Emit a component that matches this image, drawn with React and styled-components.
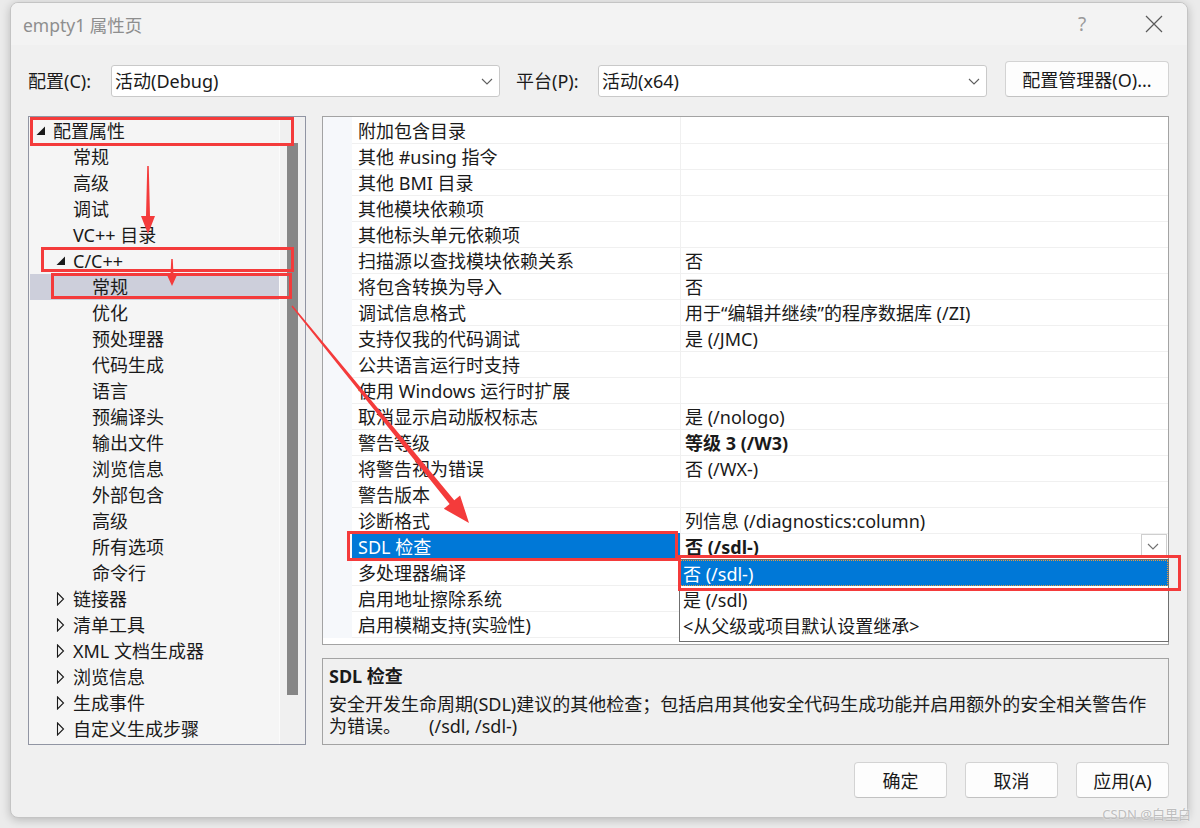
import React from "react";
import styled, { createGlobalStyle } from "styled-components";

const FONT = `"Noto Sans", "Noto Sans CJK SC", sans-serif`;

const GlobalStyle = createGlobalStyle`
  html, body {
    margin: 0;
    background: #ebebeb;
    font-family: ${FONT};
    font-size: 18px;
    color: #1a1a1a;
  }
  * { box-sizing: border-box; }
`;

const treeItems = [
  { label: "配置属性", level: 0, exp: "open" },
  { label: "常规", level: 1 },
  { label: "高级", level: 1 },
  { label: "调试", level: 1 },
  { label: "VC++ 目录", level: 1 },
  { label: "C/C++", level: 1, exp: "open" },
  { label: "常规", level: 2, selected: true },
  { label: "优化", level: 2 },
  { label: "预处理器", level: 2 },
  { label: "代码生成", level: 2 },
  { label: "语言", level: 2 },
  { label: "预编译头", level: 2 },
  { label: "输出文件", level: 2 },
  { label: "浏览信息", level: 2 },
  { label: "外部包含", level: 2 },
  { label: "高级", level: 2 },
  { label: "所有选项", level: 2 },
  { label: "命令行", level: 2 },
  { label: "链接器", level: 1, exp: "closed" },
  { label: "清单工具", level: 1, exp: "closed" },
  { label: "XML 文档生成器", level: 1, exp: "closed" },
  { label: "浏览信息", level: 1, exp: "closed" },
  { label: "生成事件", level: 1, exp: "closed" },
  { label: "自定义生成步骤", level: 1, exp: "closed" },
];

const props = [
  ["附加包含目录", ""],
  ["其他 #using 指令", ""],
  ["其他 BMI 目录", ""],
  ["其他模块依赖项", ""],
  ["其他标头单元依赖项", ""],
  ["扫描源以查找模块依赖关系", "否"],
  ["将包含转换为导入", "否"],
  ["调试信息格式", "用于“编辑并继续”的程序数据库 (/ZI)"],
  ["支持仅我的代码调试", "是 (/JMC)"],
  ["公共语言运行时支持", ""],
  ["使用 Windows 运行时扩展", ""],
  ["取消显示启动版权标志", "是 (/nologo)"],
  ["警告等级", "等级 3 (/W3)", true],
  ["将警告视为错误", "否 (/WX-)"],
  ["警告版本", ""],
  ["诊断格式", "列信息 (/diagnostics:column)"],
  ["SDL 检查", "否 (/sdl-)", true, true],
  ["多处理器编译", ""],
  ["启用地址擦除系统", ""],
  ["启用模糊支持(实验性)", ""],
];

const Page = styled.div`
  position: relative;
  width: 1200px;
  height: 828px;
  overflow: hidden;
  padding: 2px 0 0 10px;
`;

const Window = styled.div`
  width: 1178px;
  height: 816px;
  border: 1px solid #c4c4c4;
  border-radius: 8px;
  background: #f0f0f0;
  box-shadow: 0 2px 10px rgba(0, 0, 0, 0.22);
  display: flex;
  flex-direction: column;
  overflow: hidden;
`;

const TitleBar = styled.div`
  height: 42px;
  flex: none;
  background: #f3f3f3;
  display: flex;
  align-items: center;
  padding-left: 12px;
  color: #8e8e8e;
  font-size: 17.5px;
`;

const TitleButton = styled.div`
  width: 48px;
  height: 42px;
  display: flex;
  align-items: center;
  justify-content: center;
  color: #9a9a9a;
  font-size: 19px;
  margin-left: ${(p) => p.$ml || "0"};
  margin-right: ${(p) => p.$mr || "0"};
`;

const Body = styled.div`
  flex: 1;
  display: flex;
  flex-direction: column;
  padding: 16px 18px 0 17px;
`;

const ConfigRow = styled.div`
  display: flex;
  align-items: flex-end;
  height: 36px;
`;

const Label = styled.div`
  width: ${(p) => p.$w}px;
  margin-left: ${(p) => p.$ml || 0}px;
  height: 32px;
  line-height: 32px;
  white-space: nowrap;
`;

const Select = styled.div`
  width: 389px;
  height: 32px;
  background: #fff;
  border: 1px solid #c9c9c9;
  border-radius: 3px;
  display: flex;
  align-items: center;
  padding: 0 6px 0 3px;
  line-height: 30px;
`;

const Chevron = ({ size = 12, color = "#606060" }) => (
  <svg width={size} height={size / 2 + 1} viewBox="0 0 12 7" style={{ marginLeft: "auto" }}>
    <path d="M1 1 L6 6 L11 1" fill="none" stroke={color} strokeWidth="1.1" />
  </svg>
);

const PushButton = styled.div`
  width: ${(p) => p.$w}px;
  height: 36px;
  margin-left: ${(p) => p.$ml || 0}px;
  background: #fdfdfd;
  border: 1px solid #d3d3d3;
  border-bottom-color: #c2c2c2;
  border-radius: 4px;
  display: flex;
  align-items: center;
  justify-content: center;
  white-space: nowrap;
`;

const Main = styled.div`
  display: flex;
  gap: 16px;
  margin-top: 19px;
  height: 629px;
`;

const Tree = styled.div`
  width: 278px;
  border: 1px solid #9195a3;
  background: #f5f5f5;
  display: flex;
`;

const TreeList = styled.div`
  width: 250px;
  padding-top: 1px;
`;

const TreeRow = styled.div`
  height: 26px;
  display: flex;
  align-items: center;
  padding-left: ${(p) => p.$indent}px;
  background: ${(p) => (p.$selected ? "#cdcfdb" : "transparent")};
  margin-left: ${(p) => (p.$selected ? 1 : 0)}px;
  white-space: nowrap;
  line-height: 26px;
`;

const Expander = styled.div`
  width: 18px;
  height: 26px;
  display: flex;
  align-items: center;
  padding-left: 1px;
`;

const ScrollTrack = styled.div`
  flex: 1;
  background: #f0f0f0;
  border-left: 1px solid #fbfbfb;
  padding: 26px 7px 0 7px;
`;

const ScrollThumb = styled.div`
  height: 552px;
  background: #868686;
`;

const RightCol = styled.div`
  flex: 1;
  display: flex;
  flex-direction: column;
  gap: 13px;
`;

const Grid = styled.div`
  position: relative;
  height: 529px;
  border: 1px solid #a3a3a3;
  background: #fff;
`;

const GridRow = styled.div`
  display: grid;
  grid-template-columns: 29px 328px 1fr;
  height: 26px;
  line-height: 24px;
  white-space: nowrap;
`;

const Strip = styled.div`
  background: #f6f8fb;
`;

const NameCell = styled.div`
  padding: 2px 0 0 6px;
  border-bottom: 1px solid #f0f0f0;
  background: ${(p) => (p.$selected ? "#0078d7" : "transparent")};
  color: ${(p) => (p.$selected ? "#fff" : "inherit")};
`;

const ValueCell = styled.div`
  display: flex;
  align-items: center;
  padding: 2px 0 0 4px;
  border-left: 1px solid #f0f0f0;
  border-bottom: 1px solid #f0f0f0;
  font-weight: ${(p) => (p.$bold ? 700 : 400)};
  overflow: hidden;
`;

const DropButton = styled.div`
  margin-left: auto;
  margin-right: 1px;
  margin-top: -2px;
  width: 26px;
  height: 24px;
  border: 1px solid #cfcfcf;
  background: #fff;
  display: flex;
  align-items: center;
  justify-content: center;
  padding-right: 3px;
`;

const DropList = styled.div`
  position: absolute;
  left: 356px;
  top: 442px;
  width: 490px;
  height: 83px;
  background: #fff;
  border: 1px solid #6f6f6f;
  z-index: 2;
`;

const DropItem = styled.div`
  height: 26px;
  line-height: 24px;
  padding: 2px 0 0 3px;
  background: ${(p) => (p.$active ? "#0078d7" : "transparent")};
  color: ${(p) => (p.$active ? "#fff" : "inherit")};
  outline: ${(p) => (p.$active ? "1px dotted #e89a3c" : "none")};
  outline-offset: -1px;
  white-space: nowrap;
`;

const Desc = styled.div`
  flex: 1;
  border: 1px solid #a3a3a3;
  background: #f0f0f0;
  padding: 6px 6px 0 6px;
  line-height: 22px;
`;

const DescTitle = styled.div`
  font-weight: 700;
  margin-bottom: 6px;
`;

const Footer = styled.div`
  display: flex;
  justify-content: flex-end;
  gap: 18px;
  margin-top: 17px;
`;

const Watermark = styled.div`
  position: absolute;
  right: 9px;
  bottom: 5px;
  font-size: 13px;
  color: #bdbdbd;
  font-family: ${FONT};
  text-shadow: 0 0 2px #fff;
`;

const Overlay = styled.svg`
  position: absolute;
  left: 0;
  top: 0;
  pointer-events: none;
  z-index: 5;
`;

const OpenTri = () => (
  <svg width="10" height="10" viewBox="0 0 10 10">
    <path d="M9 0.5 L9 9 L0.5 9 Z" fill="#1a1a1a" />
  </svg>
);

const ClosedTri = () => (
  <svg width="9" height="14" viewBox="0 0 9 14">
    <path d="M1.5 1 L7.5 7 L1.5 13 Z" fill="none" stroke="#1a1a1a" strokeWidth="1.1" />
  </svg>
);

// text left edge per level: 29 + indent (+18 for the expander box on levels 0/1)
const indents = [6, 26, 63];

const arrowPoints = (x1, y1, x2, y2, head, headW, tail, neck) => {
  const dx = x2 - x1;
  const dy = y2 - y1;
  const len = Math.hypot(dx, dy);
  const ux = dx / len;
  const uy = dy / len;
  const px = -uy;
  const py = ux;
  const bx = x2 - ux * head;
  const by = y2 - uy * head;
  return [
    [x1 + (px * tail) / 2, y1 + (py * tail) / 2],
    [bx + (px * neck) / 2, by + (py * neck) / 2],
    [bx + (px * headW) / 2, by + (py * headW) / 2],
    [x2, y2],
    [bx - (px * headW) / 2, by - (py * headW) / 2],
    [bx - (px * neck) / 2, by - (py * neck) / 2],
    [x1 - (px * tail) / 2, y1 - (py * tail) / 2],
  ]
    .map((p) => p.join(","))
    .join(" ");
};

const RED = "#f43b3b";

const Annotations = () => (
  <Overlay width="1200" height="828" viewBox="0 0 1200 828">
    <g fill="none" stroke={RED} strokeWidth="3">
      <rect x="31.5" y="118.5" width="261" height="26" />
      <rect x="42.5" y="248.5" width="250" height="22" />
      <rect x="52.5" y="274.5" width="238" height="23" />
      <rect x="348.5" y="532.5" width="328" height="27" />
      <rect x="679.5" y="556.5" width="500" height="33" />
    </g>
    <g fill={RED}>
      <polygon points={arrowPoints(148, 166, 148, 234, 18, 14, 1.5, 4)} />
      <polygon points={arrowPoints(172, 259, 172, 286, 11, 10, 1.5, 3)} />
      <polygon points={arrowPoints(292, 306, 469, 523, 27, 21, 1.5, 6)} />
    </g>
  </Overlay>
);

export default function App() {
  return (
    <>
      <GlobalStyle />
      <Page>
        <Window>
          <TitleBar>
            empty1 属性页
            <TitleButton $ml="auto" $mr="24px">?</TitleButton>
            <TitleButton $mr="9px">
              <svg width="18" height="18" viewBox="0 0 18 18">
                <path d="M1 1 L17 17 M17 1 L1 17" stroke="#5a5a5a" strokeWidth="1.2" />
              </svg>
            </TitleButton>
          </TitleBar>
          <Body>
            <ConfigRow>
              <Label $w={83}>配置(C):</Label>
              <Select>
                活动(Debug)
                <Chevron />
              </Select>
              <Label $w={82} $ml={16}>平台(P):</Label>
              <Select>
                活动(x64)
                <Chevron />
              </Select>
              <PushButton $w={164} $ml={18}>配置管理器(O)...</PushButton>
            </ConfigRow>

            <Main>
              <Tree>
                <TreeList>
                  {treeItems.map((t, i) => (
                    <TreeRow key={i} $indent={indents[t.level] - (t.selected ? 1 : 0)} $selected={t.selected}>
                      {t.level < 2 && (
                        <Expander>
                          {t.exp === "open" && <OpenTri />}
                          {t.exp === "closed" && <ClosedTri />}
                        </Expander>
                      )}
                      {t.label}
                    </TreeRow>
                  ))}
                </TreeList>
                <ScrollTrack>
                  <ScrollThumb />
                </ScrollTrack>
              </Tree>

              <RightCol>
                <Grid>
                  {props.map(([name, value, bold, selected], i) => (
                    <GridRow key={i}>
                      <Strip />
                      <NameCell $selected={selected}>{name}</NameCell>
                      <ValueCell $bold={bold}>
                        {value}
                        {selected && (
                          <DropButton>
                            <svg width="12" height="7" viewBox="0 0 12 7">
                              <path d="M1 1 L6 6 L11 1" fill="none" stroke="#707070" strokeWidth="1.1" />
                            </svg>
                          </DropButton>
                        )}
                      </ValueCell>
                    </GridRow>
                  ))}
                  <DropList>
                    <DropItem $active>否 (/sdl-)</DropItem>
                    <DropItem>是 (/sdl)</DropItem>
                    <DropItem>&lt;从父级或项目默认设置继承&gt;</DropItem>
                  </DropList>
                </Grid>
                <Desc>
                  <DescTitle>SDL 检查</DescTitle>
                  <div>
                    安全开发生命周期(SDL)建议的其他检查；包括启用其他安全代码生成功能并启用额外的安全相关警告作为错误。&nbsp;&nbsp;&nbsp;&nbsp;&nbsp;&nbsp;(/sdl, /sdl-)
                  </div>
                </Desc>
              </RightCol>
            </Main>

            <Footer>
              <PushButton $w={93}>确定</PushButton>
              <PushButton $w={93}>取消</PushButton>
              <PushButton $w={93}>应用(A)</PushButton>
            </Footer>
          </Body>
        </Window>
        <Watermark>CSDN @白里白</Watermark>
        <Annotations />
      </Page>
    </>
  );
}
